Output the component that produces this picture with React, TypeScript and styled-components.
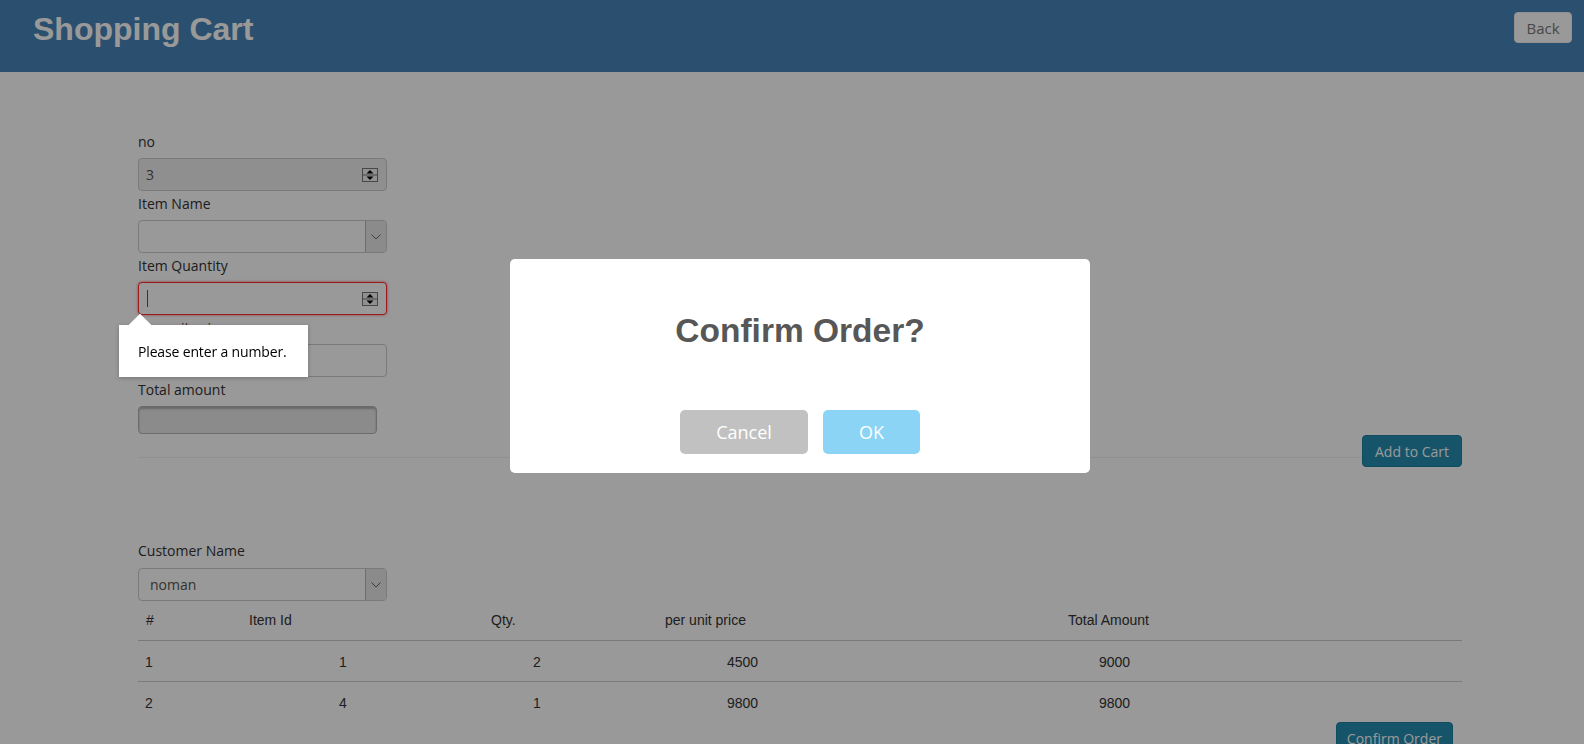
import React from "react";
import styled, { createGlobalStyle } from "styled-components";

const GlobalStyle = createGlobalStyle`
  html, body { margin: 0; padding: 0; height: 100%; overflow: hidden; }
  body {
    font-family: "Open Sans", "Noto Sans", sans-serif;
    font-size: 14px;
    color: #333;
    background: #fff;
  }
  *, *::before, *::after { box-sizing: border-box; }
`;

const Header = styled.header`
  height: 72px;
  background: #4984b7;
  display: flex;
  justify-content: space-between;
  align-items: flex-start;
  padding: 13px 12px 0 33px;
`;

const Title = styled.h1`
  margin: 0;
  font: bold 32px/32px "Liberation Sans", Arial, sans-serif;
  color: #fff;
`;

const BackButton = styled.button`
  margin-top: -1px;
  width: 58px;
  height: 31px;
  background: #fff;
  border: 1px solid #f2f2f2;
  border-radius: 4px;
  font: 15px "Open Sans", sans-serif;
  color: #777;
  padding: 0;
`;

const Main = styled.main`
  padding: 59px 122px 0 138px;
`;

const FieldGroup = styled.div<{ $last?: boolean }>`
  display: flex;
  flex-direction: column;
  align-items: flex-start;
  margin-bottom: ${(p) => (p.$last ? 0 : 2)}px;
`;

const Label = styled.label<{ $mb?: number }>`
  display: block;
  line-height: 20px;
  padding-top: 1px;
  margin-bottom: ${(p) => (p.$mb ?? 7) - 1}px;
  color: #333;
`;

const Control = styled.div<{
  $width?: number;
  $height?: number;
  $variant?: "plain" | "readonly" | "invalid" | "sunken";
}>`
  position: relative;
  width: ${(p) => p.$width ?? 249}px;
  height: ${(p) => p.$height ?? 33}px;
  border-radius: 4px;
  display: flex;
  align-items: center;
  padding: 0 8px 0 7px;
  color: #555;
  border: 1px solid
    ${(p) => (p.$variant === "invalid" ? "#ff3030" : p.$variant === "sunken" ? "#b5b5b5" : "#ccc")};
  background: ${(p) =>
    p.$variant === "readonly" ? "#eee" : p.$variant === "sunken" ? "#e8e8e8" : "#fff"};
  box-shadow: ${(p) =>
    p.$variant === "invalid"
      ? "0 0 3px rgba(255,0,0,0.6)"
      : p.$variant === "sunken"
      ? "inset 0 2px 2px rgba(0,0,0,0.25)"
      : "none"};
`;

const Value = styled.span`
  flex: 1;
  line-height: 20px;
`;

const Caret = styled.span`
  width: 1px;
  height: 17px;
  background: #d02020;
  margin-left: 1px;
`;

const SelectBox = styled.div`
  width: 249px;
  height: 33px;
  border: 1px solid #ccc;
  border-radius: 4px;
  background: #fff;
  display: flex;
  align-items: stretch;
  overflow: hidden;
  color: #555;
`;

const SelectText = styled.span`
  flex: 1;
  padding-left: 11px;
  display: flex;
  align-items: center;
`;

const SelectArrow = styled.span`
  width: 21px;
  background: #e8e8e8;
  border-left: 1px solid #b8b8b8;
  display: flex;
  align-items: center;
  justify-content: center;
`;

const Bubble = styled.div`
  position: absolute;
  left: -20px;
  top: calc(100% + 11px);
  width: 189px;
  height: 52px;
  background: #fff;
  z-index: 20;
  display: flex;
  align-items: center;
  padding-left: 19px;
  font: 14px "Open Sans", sans-serif;
  letter-spacing: -0.15px;
  color: #000;
  box-shadow: 0 1px 4px rgba(0, 0, 0, 0.25);
  &::before {
    content: "";
    position: absolute;
    left: 13px;
    top: -8px;
    width: 16px;
    height: 16px;
    background: #fff;
    transform: rotate(45deg);
  }
`;

const ActionRow = styled.div`
  display: grid;
  margin-top: 1px;
  & > * { grid-area: 1 / 1; }
`;

const Rule = styled.div`
  height: 1px;
  background: #eee;
  margin-top: 22px;
  align-self: start;
`;

const PrimaryButton = styled.button<{ $padX?: number; $height?: number }>`
  justify-self: end;
  height: ${(p) => p.$height ?? 32}px;
  padding: 0 ${(p) => p.$padX ?? 12}px;
  background: #268cb1;
  border: 1px solid #1f7fa2;
  border-radius: 4px;
  color: #fff;
  font: 14px "Open Sans", sans-serif;
`;

const CustomerSection = styled.section`
  margin-top: 73px;
`;

const Table = styled.table`
  width: 100%;
  border-collapse: collapse;
  table-layout: fixed;
  font: 14px "Liberation Sans", Arial, sans-serif;
  color: #333;
`;

const Th = styled.th`
  text-align: left;
  font-weight: normal;
  padding: 9px 0 10px 8px;
  line-height: 20px;
  border-bottom: 1px solid #ccc;
`;

const Tr = styled.tr<{ $border?: boolean }>`
  border-bottom: ${(p) => (p.$border ? "1px solid #ccc" : "none")};
`;

const Td = styled.td<{ $pad: number }>`
  padding: 11px 0 9px ${(p) => p.$pad}px;
  line-height: 20px;
`;

const ConfirmRow = styled.div`
  display: flex;
  justify-content: flex-end;
  padding-right: 9px;
`;

const Overlay = styled.div`
  position: fixed;
  inset: 0;
  background: rgba(0, 0, 0, 0.4);
  z-index: 10;
`;

const Modal = styled.div`
  position: fixed;
  top: 259px;
  left: 510px;
  width: 580px;
  background: #fff;
  border-radius: 5px;
  z-index: 11;
  padding: 52px 0 19px;
  text-align: center;
`;

const ModalTitle = styled.h2`
  margin: 0;
  font: bold 33.5px/40px "Liberation Sans", Arial, sans-serif;
  color: #575757;
`;

const ModalActions = styled.div`
  margin-top: 59px;
  display: flex;
  justify-content: center;
  gap: 15px;
`;

const ModalButton = styled.button<{ $bg: string; $width: number }>`
  width: ${(p) => p.$width}px;
  height: 44px;
  border: none;
  border-radius: 5px;
  background: ${(p) => p.$bg};
  color: #fff;
  font: 18px "Open Sans", sans-serif;
  padding: 0;
`;

const Spinner = () => (
  <svg width="16" height="14" viewBox="0 0 16 14">
    <rect x="0.5" y="0.5" width="15" height="13" fill="#f0f0f0" stroke="#777" />
    <line x1="0" x2="16" y1="7" y2="7" stroke="#777" />
    <path d="M4.5 5.5 L8 2 L11.5 5.5Z" fill="#000" />
    <path d="M4.5 8.5 L8 12 L11.5 8.5Z" fill="#000" />
  </svg>
);

const Chevron = () => (
  <svg width="10" height="6" viewBox="0 0 10 6">
    <path d="M0.5 0.5 L5 5 L9.5 0.5" fill="none" stroke="#666" strokeWidth="1" />
  </svg>
);

const columns = [
  { label: "#", width: 103, pad: 7 },
  { label: "Item Id", width: 242, pad: 98 },
  { label: "Qty.", width: 174, pad: 50 },
  { label: "per unit price", width: 403, pad: 70 },
  { label: "Total Amount", width: undefined as number | undefined, pad: 39 },
];

const rows = [
  ["1", "1", "2", "4500", "9000"],
  ["2", "4", "1", "9800", "9800"],
];

export default function App() {
  return (
    <>
      <GlobalStyle />
      <Header>
        <Title>Shopping Cart</Title>
        <BackButton>Back</BackButton>
      </Header>
      <Main>
        <FieldGroup>
          <Label>no</Label>
          <Control $variant="readonly">
            <Value>3</Value>
            <Spinner />
          </Control>
        </FieldGroup>
        <FieldGroup>
          <Label>Item Name</Label>
          <SelectBox>
            <SelectText />
            <SelectArrow>
              <Chevron />
            </SelectArrow>
          </SelectBox>
        </FieldGroup>
        <FieldGroup>
          <Label>Item Quantity</Label>
          <Control $variant="invalid">
            <Caret />
            <Value />
            <Spinner />
            <Bubble>Please enter a number.</Bubble>
          </Control>
        </FieldGroup>
        <FieldGroup>
          <Label>per unit price</Label>
          <Control $variant="plain" />
        </FieldGroup>
        <FieldGroup $last>
          <Label>Total amount</Label>
          <Control $variant="sunken" $width={239} $height={28} />
        </FieldGroup>
        <ActionRow>
          <Rule />
          <PrimaryButton>Add to Cart</PrimaryButton>
        </ActionRow>
        <CustomerSection>
          <Label $mb={8}>Customer Name</Label>
          <SelectBox>
            <SelectText>noman</SelectText>
            <SelectArrow>
              <Chevron />
            </SelectArrow>
          </SelectBox>
          <Table>
            <colgroup>
              {columns.map((c, i) => (
                <col key={i} style={c.width ? { width: c.width } : undefined} />
              ))}
            </colgroup>
            <thead>
              <tr>
                {columns.map((c) => (
                  <Th key={c.label}>{c.label}</Th>
                ))}
              </tr>
            </thead>
            <tbody>
              {rows.map((r, ri) => (
                <Tr key={ri} $border={ri < rows.length - 1}>
                  {r.map((v, ci) => (
                    <Td key={ci} $pad={columns[ci].pad}>
                      {v}
                    </Td>
                  ))}
                </Tr>
              ))}
            </tbody>
          </Table>
          <ConfirmRow>
            <PrimaryButton $padX={10} $height={33}>
              Confirm Order
            </PrimaryButton>
          </ConfirmRow>
        </CustomerSection>
      </Main>
      <Overlay />
      <Modal>
        <ModalTitle>Confirm Order?</ModalTitle>
        <ModalActions>
          <ModalButton $bg="#C1C1C1" $width={128}>
            Cancel
          </ModalButton>
          <ModalButton $bg="#8CD4F5" $width={97}>
            OK
          </ModalButton>
        </ModalActions>
      </Modal>
    </>
  );
}
